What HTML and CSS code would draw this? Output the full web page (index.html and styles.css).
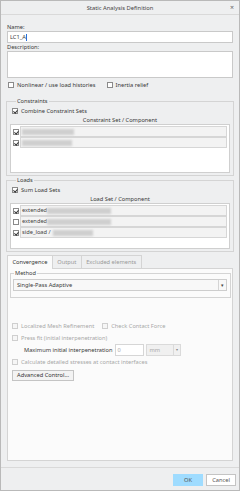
FILE: index.html
```html
<!DOCTYPE html>
<html lang="en">
<head>
    <meta charset="UTF-8">
    <title>Static Analysis Definition</title>
    <link rel="stylesheet" href="styles.css">
</head>
<body>
    <div class="dialog">
        <div class="titlebar">
            <span></span>
            <span class="title">Static Analysis Definition</span>
            <span class="close">&times;</span>
        </div>

        <div class="content">
            <div class="label">Name:</div>
            <div class="input name-input">LC1_A<span class="caret"></span></div>
            <div class="label">Description:</div>
            <div class="textarea"></div>

            <div class="check-row top-checks">
                <span class="check"><span class="box"></span>Nonlinear / use load histories</span>
                <span class="check inertia"><span class="box"></span>Inertia relief</span>
            </div>

            <fieldset class="group">
                <legend>Constraints</legend>
                <span class="check"><span class="box on"></span>Combine Constraint Sets</span>
                <div class="list-head">Constraint Set / Component</div>
                <div class="list constraints-list">
                    <div class="row"><span class="box on"></span><div class="cell"><span class="blur blur-c1"></span></div></div>
                    <div class="row"><span class="box on"></span><div class="cell"><span class="blur blur-c2"></span></div></div>
                </div>
            </fieldset>

            <fieldset class="group">
                <legend>Loads</legend>
                <span class="check"><span class="box on"></span>Sum Load Sets</span>
                <div class="list-head">Load Set / Component</div>
                <div class="list loads-list">
                    <div class="row"><span class="box on"></span><div class="cell">extended<span class="blur blur-l1"></span></div></div>
                    <div class="row"><span class="box"></span><div class="cell">extended<span class="blur blur-l1"></span></div></div>
                    <div class="row"><span class="box on"></span><div class="cell">side_load /<span class="blur blur-l3"></span></div></div>
                </div>
            </fieldset>

            <div class="tabs">
                <div class="tab active">Convergence</div>
                <div class="tab">Output</div>
                <div class="tab">Excluded elements</div>
            </div>
            <div class="panel">
                <fieldset class="group method">
                    <legend>Method</legend>
                    <div class="select">
                        <span>Single-Pass Adaptive</span>
                        <span class="arrow">&#9662;</span>
                    </div>
                </fieldset>

                <div class="options">
                    <div class="check-row">
                        <span class="check disabled"><span class="box"></span>Localized Mesh Refinement</span>
                        <span class="check disabled contact"><span class="box"></span>Check Contact Force</span>
                    </div>
                    <div class="check-row">
                        <span class="check disabled"><span class="box"></span>Press fit (initial interpenetration)</span>
                    </div>
                    <div class="check-row interp">
                        <span class="interp-label">Maximum initial interpenetration</span>
                        <span class="small-input">0</span>
                        <span class="unit">mm<span class="unit-arrow">&#9662;</span></span>
                    </div>
                    <div class="check-row">
                        <span class="check disabled"><span class="box"></span>Calculate detailed stresses at contact interfaces</span>
                    </div>
                    <button class="advanced">Advanced Control...</button>
                </div>
            </div>
        </div>

        <div class="footer">
            <button class="btn ok">OK</button>
            <button class="btn">Cancel</button>
        </div>
    </div>
</body>
</html>
```

FILE: styles.css
```css
html, body {
    margin: 0;
    padding: 0;
}

body {
    width: 240px;
    height: 491px;
    font-family: "Noto Sans", "Open Sans", sans-serif;
    font-size: 5.7px;
    color: #3a3a3a;
    background: #eeeff0;
}

.dialog {
    box-sizing: border-box;
    width: 240px;
    height: 491px;
    border: 1px solid #b9b9b9;
    display: flex;
    flex-direction: column;
}

.titlebar {
    height: 14px;
    border-bottom: 1px solid #d9d9d9;
    display: grid;
    grid-template-columns: 1fr auto 1fr;
    align-items: center;
    color: #444;
}

.title {
    font-size: 5.8px;
}

.close {
    justify-self: end;
    margin-right: 5px;
    font-size: 7px;
    color: #666;
}

.content {
    padding: 8px 6px 0 6px;
    flex: 1;
}

.label {
    height: 8px;
    line-height: 8px;
}

.input {
    box-sizing: border-box;
    height: 12px;
    line-height: 10px;
    background: #fff;
    border: 1px solid #c9c9c9;
    padding: 0 2px;
}

.caret {
    display: inline-block;
    width: 1px;
    height: 7px;
    background: #2a6fd8;
    vertical-align: middle;
}

.textarea {
    box-sizing: border-box;
    height: 27px;
    background: #fff;
    border: 1px solid #c9c9c9;
}

.check-row {
    display: flex;
    align-items: center;
    height: 12px;
}

.top-checks {
    margin-top: 1px;
    padding-left: 1px;
}

.check {
    display: inline-flex;
    align-items: center;
    height: 8px;
    line-height: 8px;
}

.inertia {
    margin-left: 11px;
}

.box {
    box-sizing: border-box;
    width: 6px;
    height: 6px;
    margin-right: 3px;
    border: 1px solid #8a8a8a;
    background: #fff;
    position: relative;
    flex: 0 0 auto;
}

.box.on::after {
    content: "";
    position: absolute;
    left: 1px;
    top: 0;
    width: 1.5px;
    height: 3px;
    border: solid #333;
    border-width: 0 1px 1px 0;
    transform: rotate(40deg);
}

.group {
    margin: 6px -1px 0 -1px;
    padding: 2px 3px 2px 3px;
    border: 1px solid #d4d4d4;
    border-radius: 0;
}

.group + .group {
    margin-top: 0;
}

.group legend {
    padding: 0 1px;
    margin-left: 6px;
    line-height: 8px;
}

.group .check {
    margin-left: 2px;
}

.list-head {
    height: 8px;
    line-height: 8px;
    text-align: center;
}

.list {
    box-sizing: border-box;
    background: #fff;
    border: 1px solid #cfcfcf;
    padding: 1px 2px 0 1px;
}

.constraints-list {
    height: 49px;
}

.loads-list {
    height: 46px;
}

.row {
    display: flex;
    align-items: center;
    height: 11px;
}

.row .box {
    margin: 0 1px 0 1px;
}

.cell {
    box-sizing: border-box;
    flex: 1;
    height: 11px;
    line-height: 9px;
    background: #f3f3f3;
    border: 1px solid #d6d6d6;
    padding-left: 1px;
    display: flex;
    align-items: center;
    color: #444;
}

.blur {
    display: inline-block;
    height: 6px;
    background: #cfcfcf;
    filter: blur(1.2px);
}

.blur-c1 {
    width: 52px;
}

.blur-c2 {
    width: 50px;
}

.blur-l1 {
    width: 64px;
}

.blur-l3 {
    width: 40px;
    margin-left: 2px;
}

.tabs {
    display: flex;
    margin-top: 3px;
    height: 13px;
}

.tab {
    box-sizing: border-box;
    height: 13px;
    line-height: 12px;
    padding: 0 4.4px;
    border: 1px solid #d4d4d4;
    border-bottom: none;
    margin-left: -1px;
    color: #999;
}

.tab:first-child {
    margin-left: 0;
}

.tab.active {
    background: #fbfbfb;
    color: #333;
    height: 14px;
    position: relative;
    z-index: 1;
}

.panel {
    box-sizing: border-box;
    height: 193px;
    background: #fbfbfb;
    border: 1px solid #d4d4d4;
    padding: 0 1px 0 2px;
}

.method {
    margin: 0;
    padding: 2px 3px 6px 2px;
}

.method legend {
    margin-left: 1px;
}

.select {
    box-sizing: border-box;
    height: 12px;
    background: #f8f8f8;
    border: 1px solid #cdcdcd;
    display: flex;
    justify-content: space-between;
    align-items: center;
    padding-left: 3px;
}

.arrow {
    width: 7px;
    height: 10px;
    border-left: 1px solid #d4d4d4;
    text-align: center;
    line-height: 10px;
    font-size: 5px;
    color: #444;
}

.options {
    margin-top: 22px;
    padding-left: 2px;
}

.disabled {
    color: #a8a8a8;
}

.disabled .box {
    border-color: #cfcfcf;
    background: #f6f6f6;
}

.contact {
    margin-left: 8px;
}

.interp-label {
    margin-left: 12px;
}

.small-input {
    box-sizing: border-box;
    width: 29px;
    height: 12px;
    margin-left: 2px;
    background: #fff;
    border: 1px solid #d6d6d6;
    color: #aaa;
    line-height: 10px;
    padding-left: 2px;
}

.unit {
    box-sizing: border-box;
    width: 35px;
    height: 12px;
    margin-left: 2px;
    background: #f0f0f0;
    border: 1px solid #dadada;
    color: #aaa;
    line-height: 10px;
    padding-left: 3px;
    display: flex;
    justify-content: space-between;
}

.unit-arrow {
    width: 6px;
    border-left: 1px solid #dadada;
    text-align: center;
    font-size: 4px;
    color: #888;
}

button {
    font-family: inherit;
    font-size: 5.7px;
    color: #333;
    cursor: pointer;
}

.advanced {
    margin-top: 2px;
    height: 11px;
    padding: 0 4px;
    line-height: 9px;
    background: #f3f3f3;
    border: 1px solid #c4c4c4;
    border-radius: 0;
}

.footer {
    margin-top: 6px;
    border-top: 1px solid #d9d9d9;
    padding: 6px 3px 0 0;
    height: 24px;
    display: flex;
    justify-content: flex-end;
    gap: 3px;
    box-sizing: border-box;
}

.btn {
    width: 30px;
    height: 12px;
    padding: 0;
    border: 1px solid #c4c4c4;
    background: #fff;
    color: #555;
}

.btn.ok {
    background: #9fdcff;
    border-color: #9fdcff;
}
```
